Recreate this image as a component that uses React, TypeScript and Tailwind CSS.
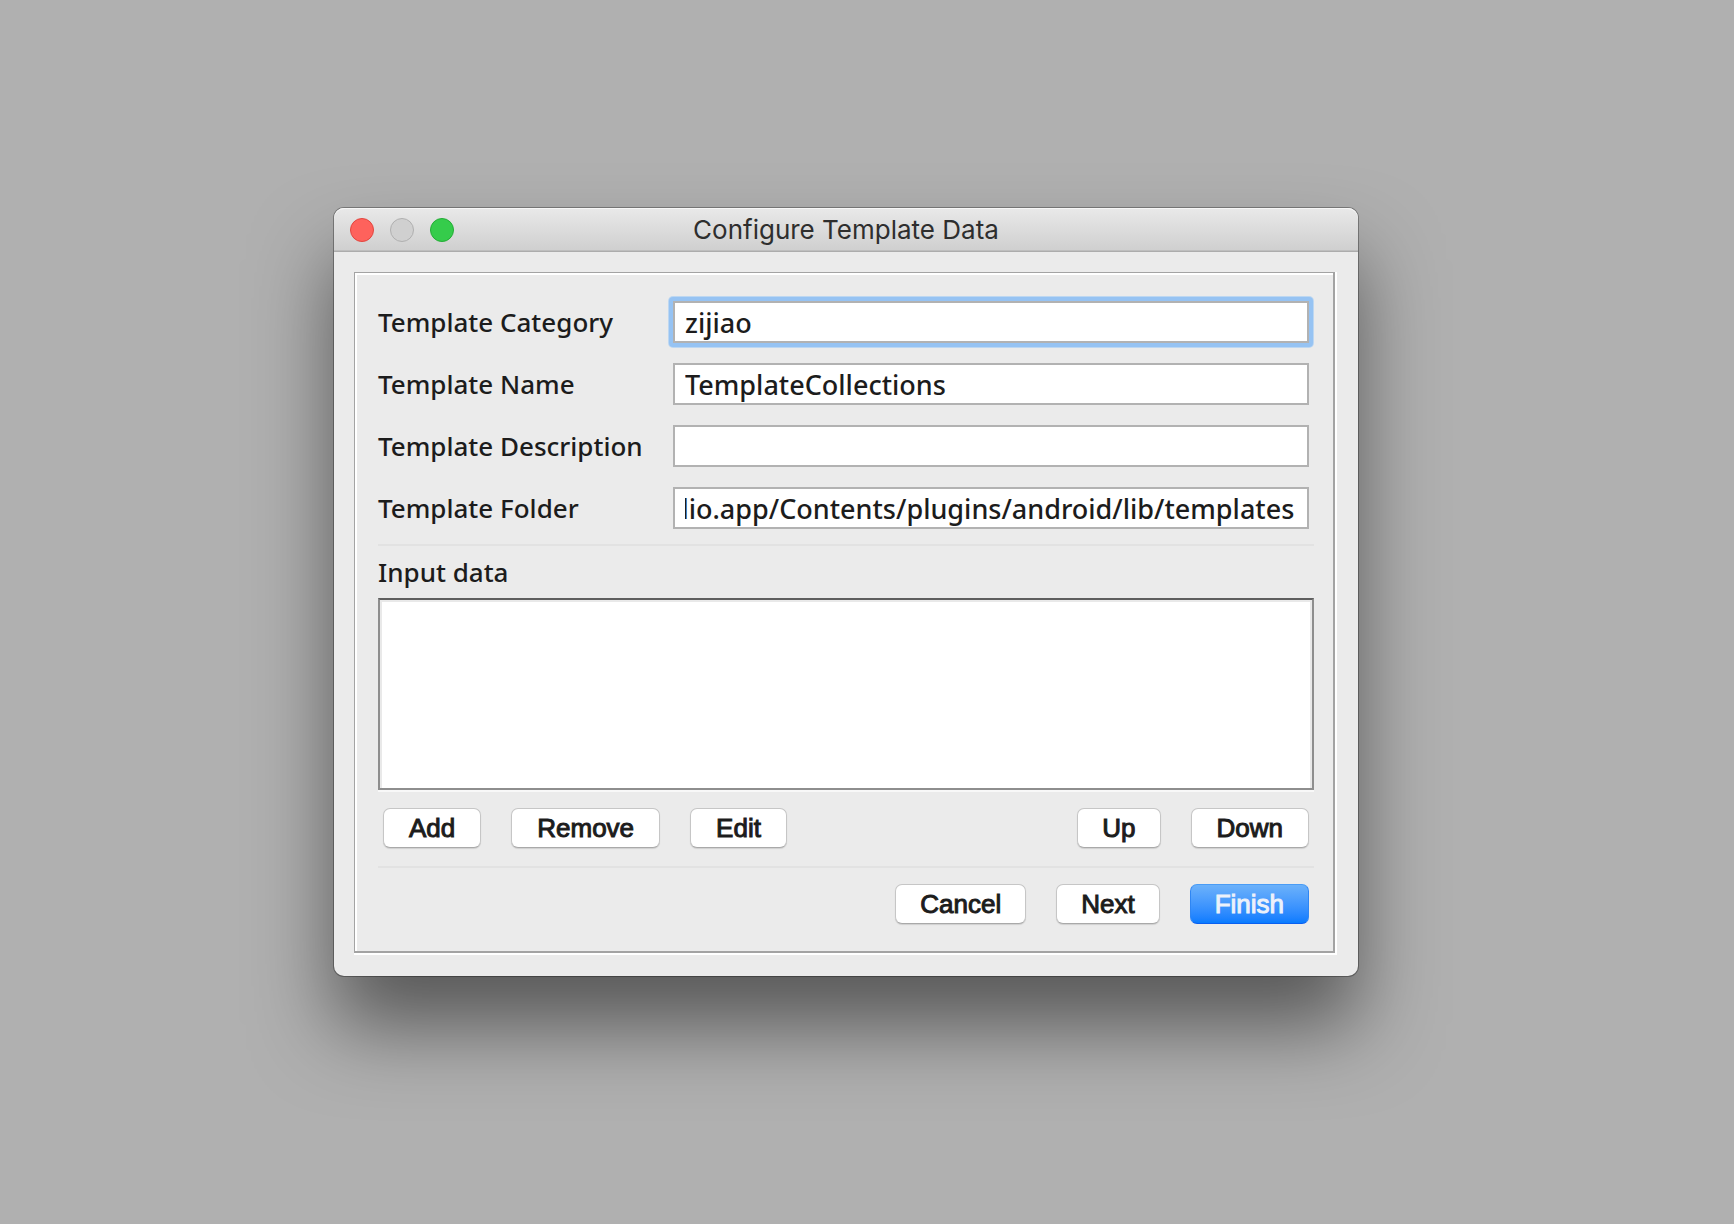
import React, { useLayoutEffect, useRef } from "react";

const rows = [
  { id: "category", label: "Template Category", value: "zijiao", focused: true },
  { id: "name", label: "Template Name", value: "TemplateCollections" },
  { id: "description", label: "Template Description", value: "" },
  { id: "folder", label: "Template Folder", value: "dio.app/Contents/plugins/android/lib/templates" },
];

function Field({ id, value, focused }: { id: string; value: string; focused?: boolean }) {
  const ref = useRef<HTMLInputElement>(null);

  // Long values show their end, as after typing.
  useLayoutEffect(() => {
    const showEnd = () => {
      if (ref.current) ref.current.scrollLeft = ref.current.scrollWidth;
    };
    showEnd();
    document.fonts.ready.then(showEnd);
  }, []);

  return (
    <div className={focused ? "-m-1 rounded-[4px] bg-[#96c3f3] p-1 shadow-[0_0_0_1px_#bdd7f1]" : ""}>
      <input
        ref={ref}
        id={id}
        type="text"
        defaultValue={value}
        className="block h-[42px] w-full border-2 border-[#b2b2b2] bg-white pr-[13px] pl-[10px] text-[27px] font-medium text-[#1c1c1c] outline-none"
      />
    </div>
  );
}

function Button({ children, primary, wide }: { children: string; primary?: boolean; wide?: boolean }) {
  const look = primary
    ? "border-t-[#4a9cf5] border-x-[#2f86f3] border-b-[#0a5ff0] bg-linear-to-b from-[#6bb1fa] to-[#067bff] text-[#ecf1fa]"
    : "border-[#c6c6c6] border-b-[#a9a9a9] bg-white text-[#1c1c1c] shadow-[0_1px_1px_rgba(0,0,0,0.12)]";
  return (
    <button
      type="button"
      className={
        "h-10 rounded-[7px] border font-['Liberation_Sans',sans-serif] text-[26px] leading-9 [-webkit-text-stroke:1px] " +
        (wide ? "px-[25px] " : "px-6 ") +
        look
      }
    >
      {children}
    </button>
  );
}

function Separator() {
  return <hr className="border-t-2 border-[#e2e2e2]" />;
}

export default function App() {
  return (
    <main className="min-h-screen bg-[#b0b0b0] pt-[208px] pr-[376px] pb-10 pl-[334px] font-['Noto_Sans',sans-serif] text-[26px] font-medium text-[#1c1c1c]">
      <section className="rounded-[10px] bg-[#ebebeb] shadow-[0_0_0_1px_rgba(0,0,0,0.3),0_50px_80px_rgba(0,0,0,0.5)]">
        <header className="grid h-11 grid-cols-[1fr_auto_1fr] items-center rounded-t-[10px] border-b border-[#acacac] bg-linear-to-b from-[#e9e9e9] to-[#cfcfcf] px-4 shadow-[inset_0_1px_0_#f6f6f6,inset_0_-1px_0_#bebebe]">
          <div className="flex gap-4">
            <button type="button" aria-label="Close" className="size-6 rounded-full border border-[#e2463f] bg-[#fe625c]" />
            <button type="button" aria-label="Minimize" className="size-6 rounded-full border border-[#b0b0b0] bg-[#d0d0d0]" />
            <button type="button" aria-label="Zoom" className="size-6 rounded-full border border-[#24ad36] bg-[#35cc4b]" />
          </div>
          <h1 className="pt-px font-['Inter',sans-serif] text-[26px] leading-8 font-normal text-[#2e2e2e]">
            Configure Template Data
          </h1>
        </header>

        <div className="pt-5 pr-[21px] pb-[21px] pl-5">
          <div className="border-r-2 border-b-2 border-white">
            <form className="border-t border-r-2 border-b-2 border-l border-[#a3a3a3] pt-7 pr-[19px] pb-[27px] pl-[23px] shadow-[inset_2px_2px_0_#fff]">
              <div className="mb-[15px] flex flex-col gap-5 pr-[5px]">
                {rows.map((row) => (
                  <div key={row.id} className="grid grid-cols-[295px_1fr] items-center">
                    <label htmlFor={row.id} className="leading-[42px]">
                      {row.label}
                    </label>
                    <Field id={row.id} value={row.value} focused={row.focused} />
                  </div>
                ))}
              </div>

              <Separator />

              <label htmlFor="inputs" className="my-[5px] block leading-[42px]">
                Input data
              </label>
              <div className="border-b-2 border-[#f8f8f8]">
                <select
                  id="inputs"
                  multiple
                  size={4}
                  className="block h-48 w-full appearance-none border-2 border-[#8e8e8e] border-t-[#5e5e5e] bg-white shadow-[inset_2px_2px_0_#e9e9e9,inset_-2px_0_0_#e9e9e9] outline-none"
                />
              </div>

              <div className="mt-4 mb-[18px] flex gap-[30px] px-[5px]">
                <Button wide>Add</Button>
                <Button wide>Remove</Button>
                <Button wide>Edit</Button>
                <div className="grow" />
                <Button>Up</Button>
                <Button wide>Down</Button>
              </div>

              <Separator />

              <div className="mt-4 flex justify-end gap-[30px] px-[5px]">
                <Button>Cancel</Button>
                <Button>Next</Button>
                <Button primary>Finish</Button>
              </div>
            </form>
          </div>
        </div>
      </section>
    </main>
  );
}
